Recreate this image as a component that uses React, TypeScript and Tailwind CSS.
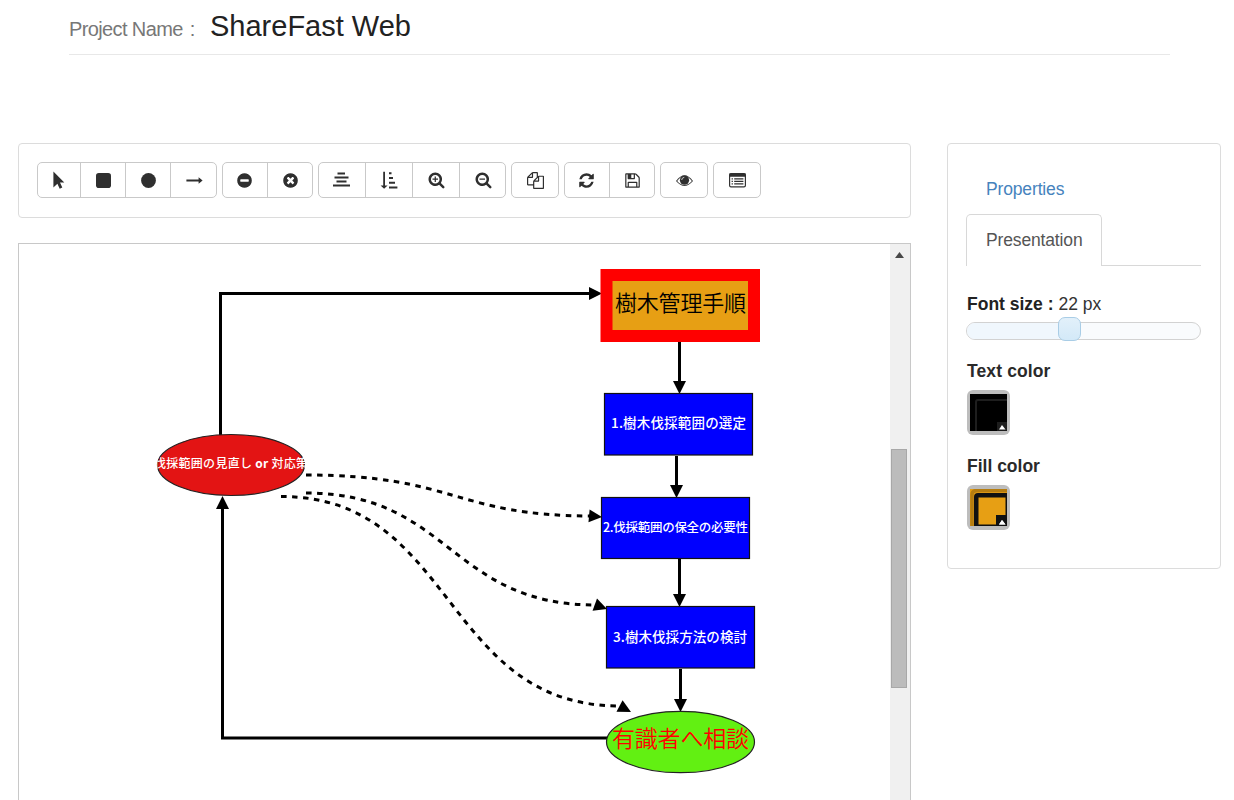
import type { ReactNode } from "react";

const DISC =
  "M1664 896q0 209-103 385.5t-279.5 279.5-385.5 103-385.5-103-279.5-279.5-103-385.5 103-385.5 279.5-279.5 385.5-103 385.5 103 279.5 279.5 103 385.5z";
const LENS =
  "M1216 832q0-185-131.5-316.5t-316.5-131.5-316.5 131.5-131.5 316.5 131.5 316.5 316.5 131.5 316.5-131.5 131.5-316.5zm512 832q0 53-37.5 90.5t-90.5 37.5q-54 0-90-38l-343-342q-179 124-399 124-143 0-273.5-55.5t-225-150-150-225-55.5-273.5 55.5-273.5 150-225 225-150 273.5-55.5 273.5 55.5 225 150 150 225 55.5 273.5q0 220-124 399l343 343q37 37 37 90z";

const ICONS: Record<string, ReactNode> = {
  pointer: <path d="M3.4 -0.4 14.3 10.5H10L12.3 15.4 9.7 16.7 7.4 11.8 3.4 15.6z" />,
  square: <rect x="1" y="1" width="15" height="15" rx="2.8" />,
  circle: <circle cx="8.5" cy="8.5" r="7.4" />,
  arrow: <path d="M.4 7.5H12.6V5.2L16.6 8.5 12.6 11.8V9.5H.4z" />,
  minus: (
    <path
      fillRule="evenodd"
      transform="scale(.0095)"
      d={"M1344 960v-128q0-26-19-45t-45-19h-768q-26 0-45 19t-19 45v128q0 26 19 45t45 19h768q26 0 45-19t19-45z" + DISC}
    />
  ),
  times: (
    <path
      fillRule="evenodd"
      transform="scale(.0095)"
      d={
        "M1277 1122q0-26-19-45l-181-181 181-181q19-19 19-45 0-27-19-46l-90-90q-19-19-46-19-26 0-45 19l-181 181-181-181q-19-19-45-19-27 0-46 19l-90 90q-19 19-19 46 0 26 19 45l181 181-181 181q-19 19-19 45 0 27 19 46l90 90q19 19 46 19 26 0 45-19l181-181 181 181q19 19 45 19 27 0 46-19l90-90q19-19 19-46z" +
        DISC
      }
    />
  ),
  center: <path d="M4.500 .5h7.500v2H4.500zM1.500 4.500h14v2H1.500zM3.500 8.500h10v2H3.500zM0 12.500h17v2H0z" />,
  sort: (
    <path d="M2.2-.2h1.8v13.6h2.6L3.1 16.8-.4 13.4h2.6zM8 .2h2.500v2H8zM8 5h4v2H8zM8 9.700h6v2H8zM8 14.500h8.400v2H8z" />
  ),
  zoomIn: (
    <g transform="translate(-.1 -.8) scale(.0096)">
      <path fillRule="evenodd" d={LENS} />
      <path d="M704 544h128v224h224v128H832v224H704V896H480V768h224z" />
    </g>
  ),
  zoomOut: (
    <g transform="translate(-.1 -.8) scale(.0096)">
      <path fillRule="evenodd" d={LENS} />
      <path d="M480 768h576v128H480z" />
    </g>
  ),
  files: (
    <path
      transform="scale(.0095)"
      d="M1696 384q40 0 68 28t28 68v1216q0 40-28 68t-68 28h-960q-40 0-68-28t-28-68v-288h-544q-40 0-68-28t-28-68v-672q0-40 20-88t48-76l408-408q28-28 76-48t88-20h416q40 0 68 28t28 68v328q68-40 128-40h416zm-544 213l-299 299h299v-299zm-640-384l-299 299h299v-299zm196 647l316-316v-416h-384v416q0 40-28 68t-68 28h-416v640h512v-256q0-40 20-88t48-76zm956 804v-1152h-384v416q0 40-28 68t-68 28h-416v640h896z"
    />
  ),
  refresh: (
    <path
      transform="scale(.0095)"
      d="M1639 1056q0 5-1 7-64 268-268 434.5t-478 166.5q-146 0-282.5-55t-243.5-157l-129 129q-19 19-45 19t-45-19-19-45v-448q0-26 19-45t45-19h448q26 0 45 19t19 45-19 45l-137 137q71 66 161 102t187 36q134 0 250-65t186-179q11-17 53-117 8-23 30-23h192q13 0 22.5 9.5t9.5 22.5zm25-800v448q0 26-19 45t-45 19h-448q-26 0-45-19t-19-45 19-45l138-138q-148-137-349-137-134 0-250 65t-186 179q-11 17-53 117-8 23-30 23h-199q-13 0-22.5-9.5t-9.5-22.5v-7q65-268 270-434.5t480-166.5q146 0 284 55.5t245 156.5l130-129q19-19 45-19t45 19 19 45z"
    />
  ),
  save: (
    <path
      transform="scale(.0095)"
      d="M512 1536h768v-384h-768v384zm896 0h128v-896q0-14-10-38.5t-20-34.5l-281-281q-10-10-34-20t-39-10v416q0 40-28 68t-68 28h-576q-40 0-68-28t-28-68v-416h-128v1280h128v-416q0-40 28-68t68-28h832q40 0 68 28t28 68v416zm-384-928v-320q0-13-9.5-22.5t-22.5-9.5h-192q-13 0-22.5 9.5t-9.5 22.5v320q0 13 9.5 22.5t22.5 9.5h192q13 0 22.5-9.5t9.5-22.5zm640 32v928q0 40-28 68t-68 28h-1344q-40 0-68-28t-28-68v-1344q0-40 28-68t68-28h928q40 0 88 20t76 48l280 280q28 28 48 76t20 88z"
    />
  ),
  eye: (
    <>
      <path d="M.6 9Q8.5-1.6 16.4 9 8.5 18 .6 9z" fill="none" stroke="#444" strokeWidth="1.1" />
      <circle cx="8.5" cy="8.2" r="4.6" />
      <path d="M5.7 8Q5.8 5.6 8.3 5.3" fill="none" stroke="#ccc" strokeWidth="1" />
    </>
  ),
  list: (
    <>
      <rect x=".6" y="1.6" width="15.8" height="13.2" rx="1.4" fill="none" stroke="#333" strokeWidth="1.2" />
      <path d="M.4 1.4h16.2v3.4H.4zM2.6 6.3h1.3v1.2H2.6zM5.2 6.3h9.2v1.2H5.2zM2.6 8.8h1.3V10H2.6zM5.2 8.8h9.2V10H5.2zM2.6 11.3h1.3v1.2H2.6zM5.2 11.3h9.2v1.2H5.2z" />
    </>
  ),
};

const GROUPS: { icon: string; width: string }[][] = [
  [
    { icon: "pointer", width: "w-[44px]" },
    { icon: "square", width: "w-[45px]" },
    { icon: "circle", width: "w-[45px]" },
    { icon: "arrow", width: "w-[46px]" },
  ],
  [
    { icon: "minus", width: "w-[46px]" },
    { icon: "times", width: "w-[45px]" },
  ],
  [
    { icon: "center", width: "w-[48px]" },
    { icon: "sort", width: "w-[47px]" },
    { icon: "zoomIn", width: "w-[47px]" },
    { icon: "zoomOut", width: "w-[46px]" },
  ],
  [{ icon: "files", width: "w-[48px]" }],
  [
    { icon: "refresh", width: "w-[46px]" },
    { icon: "save", width: "w-[45px]" },
  ],
  [{ icon: "eye", width: "w-[48px]" }],
  [{ icon: "list", width: "w-[48px]" }],
];

function Toolbar() {
  return (
    <div className="flex h-[75px] items-start gap-[5px] rounded border border-[#dcdcdc] pt-[18.5px] pl-[18px]">
      {GROUPS.map((group, g) => (
        <div
          key={g}
          className="flex h-[36px] shrink-0 divide-x divide-[#c9c9c9] overflow-hidden rounded-[5px] outline -outline-offset-1 outline-[#c9c9c9]"
        >
          {group.map(({ icon, width }) => (
            <button key={icon} className={`flex items-center justify-center ${width}`} aria-label={icon}>
              <svg width="17" height="17" viewBox="0 0 17 17" fill="#2f2f2f" className="overflow-visible">
                {ICONS[icon]}
              </svg>
            </button>
          ))}
        </div>
      ))}
    </div>
  );
}

function Arrow({ x, y, angle }: { x: number; y: number; angle: number }) {
  return <path d="M0 0-13-6.500V6.500z" transform={`translate(${x} ${y}) rotate(${angle})`} />;
}

function Diagram() {
  return (
    <svg width="871" height="557" viewBox="19 244 871 557" className="block shrink-0" fontFamily="'Noto Sans CJK JP', sans-serif">
      <defs>
        <clipPath id="reviewClip">
          <rect x="157" y="430" width="149" height="70" />
        </clipPath>
      </defs>
      <g fill="none" stroke="#000" strokeWidth="3">
        <path d="M220.500 436V293.500H592" />
        <path d="M608 738H222.500V506" />
        <path d="M679.500 341V384M676.500 456V488M679.500 559V597M680.500 669V702" />
        <g strokeDasharray="5.500 5.500">
          <path d="M306 475C455 475 455 516 592 516" />
          <path d="M306 493C450 493 450 605 596 605" />
          <path d="M281 496.500C456 496.500 442 706 620 706" />
        </g>
      </g>
      <Arrow x={602} y={293.500} angle={0} />
      <Arrow x={222.500} y={496} angle={-90} />
      <Arrow x={679.500} y={394} angle={90} />
      <Arrow x={676.500} y={498} angle={90} />
      <Arrow x={679.500} y={607} angle={90} />
      <Arrow x={680.500} y={712} angle={90} />
      <Arrow x={602} y={517} angle={5} />
      <Arrow x={607} y={609} angle={20} />
      <Arrow x={631} y={712} angle={28} />

      <rect x="606.500" y="275" width="147.500" height="61" fill="#e79f14" stroke="#f00" strokeWidth="12" />
      <g stroke="#111" strokeWidth="1.200" fill="#00f">
        <rect x="604.500" y="393.500" width="148" height="61.500" />
        <rect x="601.500" y="497.500" width="148" height="61" />
        <rect x="606.500" y="606.500" width="148" height="61.500" />
      </g>
      <ellipse cx="231" cy="465" rx="73.500" ry="30.500" fill="#e31414" stroke="#222" strokeWidth="1.200" />
      <ellipse cx="680.500" cy="742" rx="74" ry="30.700" fill="#62f012" stroke="#222" strokeWidth="1.200" />

      <text x="615" y="311" fontSize="22" fontWeight="350" textLength="131">樹木管理手順</text>
      <text x="612" y="747" fontSize="23" fontWeight="350" fill="#f00" textLength="137">有識者へ相談</text>
      <g fill="#fff" fontWeight="500" fontSize="13.500">
        <text x="611" y="427.500" textLength="135">1.樹木伐採範囲の選定</text>
        <text x="603" y="531.500" fontSize="12.500" textLength="145">2.伐採範囲の保全の必要性</text>
        <text x="613" y="641.500" textLength="134">3.樹木伐採方法の検討</text>
        <g clipPath="url(#reviewClip)">
          <text x="154" y="468" fontSize="12" textLength="154">
            伐採範囲の見直し <tspan fontWeight="700">or</tspan> 対応策
          </text>
        </g>
      </g>
    </svg>
  );
}

function Canvas() {
  return (
    <div className="mt-[25px] flex h-[558px] overflow-hidden border-x border-t border-[#c8c8c8]">
      <Diagram />
      <div className="flex grow flex-col items-center bg-[#f0f0f0] pt-2 pr-[2px]">
        <svg width="9" height="6" viewBox="0 0 9 6" fill="#484848">
          <path d="M0 6 4.500 0 9 6z" />
        </svg>
        <div className="mt-[191px] h-[239px] w-4 border border-[#a8a8a8] bg-[#bcbcbc]" />
      </div>
    </div>
  );
}

function Swatch({ children }: { children: ReactNode }) {
  return (
    <div className="h-[45px] w-[43px] rounded-[6px] bg-[#bdbdbd] pt-1 pl-[3px]">
      <svg width="37" height="37" viewBox="0 0 37 37">
        {children}
        <path d="M29 35.500 32 31 35.500 35.500z" fill="#fff" />
      </svg>
    </div>
  );
}

function Sidebar() {
  return (
    <aside className="flex h-[426px] w-[274px] flex-col rounded border border-[#dcdcdc] px-[19px] text-[17.500px] leading-[26px] text-[#333]">
      <div className="mt-[32px] pl-[19px] tracking-[-0.150px] text-[#4683bd]">Properties</div>
      <div className="-ml-px mt-[12px] flex h-[52px]">
        <div className="w-[136px] rounded-t-[5px] border border-b-0 border-[#d8d8d8] pt-[12px] pl-[19px] tracking-[-0.150px] text-[#555]">
          Presentation
        </div>
        <div className="grow border-b border-[#d8d8d8]" />
      </div>
      <div className="mt-[25px] whitespace-pre">
        <b className="text-[#222]">Font size :</b> 22 px
      </div>
      <div className="relative mt-[5px] -ml-px h-[18px] rounded-[9px] border border-[#d2d2d2] bg-[#f9fbfd]">
        <div className="h-full w-[103px] rounded-l-[8px] bg-[#f0f7fd]" />
        <div className="absolute -top-[6px] left-[91px] h-6 w-[23px] rounded-[7px] border border-[#a9cde6] bg-linear-to-b from-[#e2f0fa] to-[#d3e9f8]" />
      </div>
      <b className="mt-[18px] tracking-[0.120px] text-[#2a2a2a]">Text color</b>
      <div className="mt-[6px]">
        <Swatch>
          <rect width="37" height="37" />
          <path d="M6 37V8Q6 6 8 6H37" fill="none" stroke="#1e1e1e" strokeWidth="2" />
          <path d="M27 28h10v9H27z" fill="#1d1d1d" />
        </Swatch>
      </div>
      <b className="mt-[18px] text-[#2a2a2a]">Fill color</b>
      <div className="mt-[6px]">
        <Swatch>
          <rect width="37" height="37" fill="#e79f14" />
          <path d="M2 37V6Q2 1.500 7 1.500H37" fill="none" stroke="#b67d10" strokeWidth="3.500" />
          <path d="M4 37V8Q4 4 8 4H37V37z" fill="#111" />
          <rect x="8.500" y="8.500" width="27" height="27" fill="#e79f14" />
          <path d="M26 26h11v11H26z" fill="#111" />
          <path d="M29 35.500 32 31 35.500 35.500z" fill="#fff" />
        </Swatch>
      </div>
    </aside>
  );
}

export default function App() {
  return (
    <div className="h-[800px] w-[1234px] overflow-hidden bg-white font-['Liberation_Sans','Noto_Sans_CJK_JP',sans-serif]">
      <header className="ml-[69px] flex h-[55px] w-[1101px] items-baseline border-b border-[#e8e8e8] pt-[6px]">
        <span className="w-[141px] whitespace-pre text-[20px] tracking-[-0.620px] text-[#777]">
          Project Name <span className="ml-[2px]">:</span>
        </span>
        <h1 className="text-[29px] leading-[40px] text-[#222]">ShareFast Web</h1>
      </header>
      <main className="mt-[87.500px] flex items-start gap-[36px] pl-[18px]">
        <section className="w-[893px]">
          <Toolbar />
          <Canvas />
        </section>
        <Sidebar />
      </main>
    </div>
  );
}
